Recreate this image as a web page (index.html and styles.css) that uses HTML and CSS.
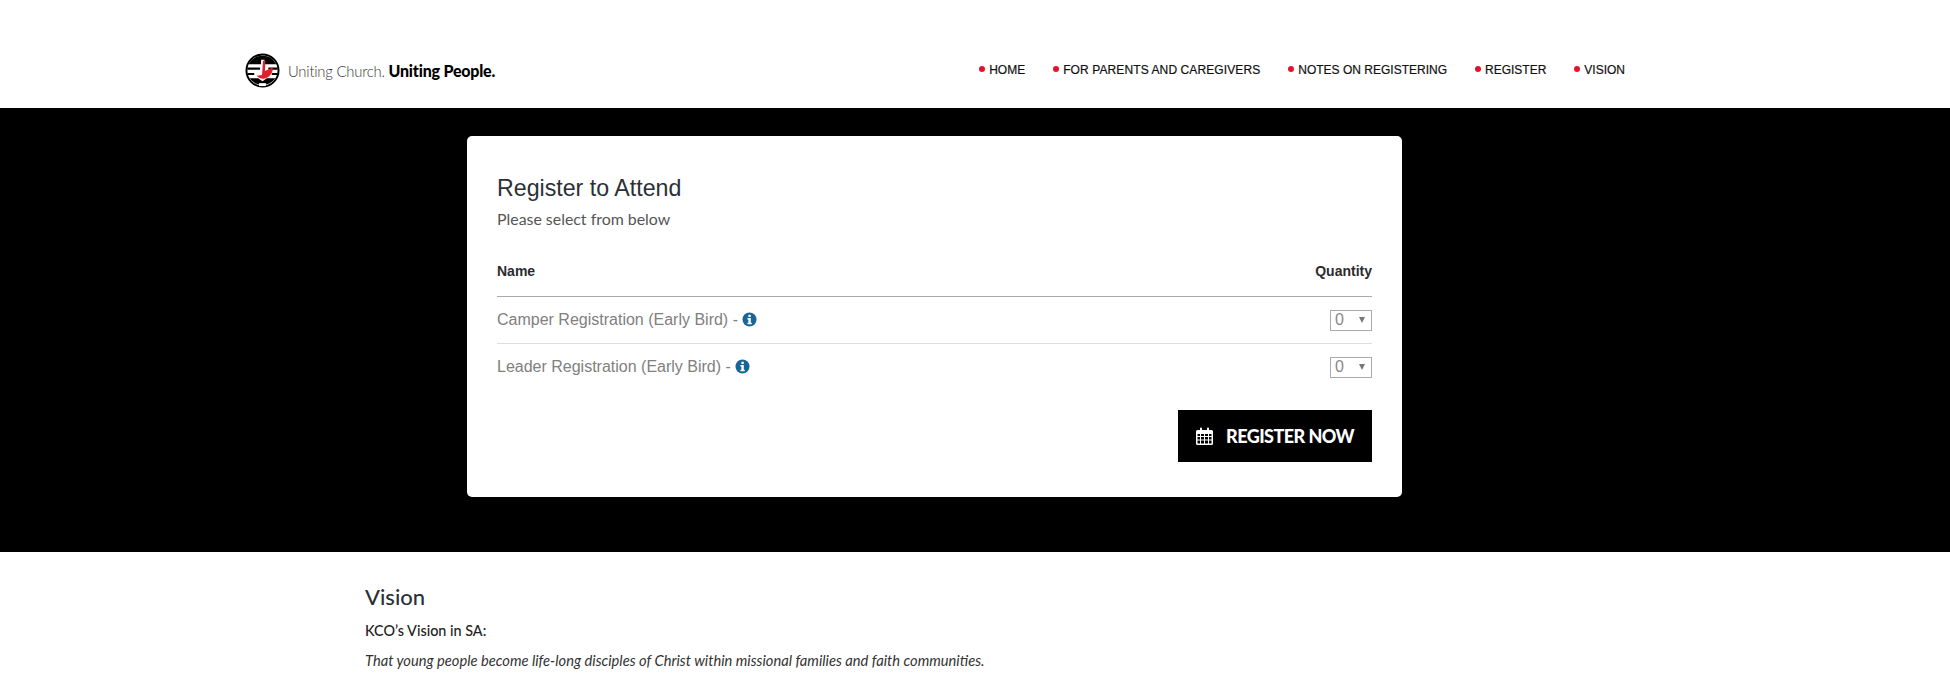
FILE: index.html
```html
<!DOCTYPE html>
<html lang="en">
<head>
<meta charset="utf-8">
<title>Register to Attend</title>
<link rel="stylesheet" href="styles.css">
</head>
<body>
<header class="site-header">
  <a class="logo" href="#">
    <svg class="logo-mark" viewBox="0 0 36 36" width="35" height="35" aria-hidden="true">
      <circle cx="18" cy="18" r="16.500" fill="#fff" stroke="#000" stroke-width="2"/>
      <path d="M3.800 11.500A16 16 0 0 1 32.200 11.500H20V7h-3.500v4.500z" fill="#000"/>
      <path d="M2.500 15h13v2.200h-13zM24 15h9.500v2.200H24z" fill="#000"/>
      <path d="M2.500 20.500h7v2h-7zM27.500 20.500h6v2h-6z" fill="#000"/>
      <path d="M4.800 26h8.700l4.500 3 4.500-3h8.700A16 16 0 0 1 4.800 26z" fill="#000"/>
      <path d="M14.500 31h7v3h-7z" fill="#fff"/>
      <path d="M18.500 8h2.500l-.5 10.500 8-3.500c.8 6-4.500 11.500-10 11.500-2.500 0-4.500-1-6.500-3l5.500-1z" fill="#e2202c"/>
    </svg>
    <span class="logo-text">Uniting Church. <b>Uniting People.</b></span>
  </a>
  <nav class="main-nav">
    <a href="#">HOME</a>
    <a class="nav-wide" href="#">FOR PARENTS AND CAREGIVERS</a>
    <a href="#">NOTES ON REGISTERING</a>
    <a href="#">REGISTER</a>
    <a href="#">VISION</a>
  </nav>
</header>
<section class="band">
  <div class="card">
    <h2 class="card-title">Register to Attend</h2>
    <p class="card-sub">Please select from below</p>
    <div class="row row-head"><span>Name</span><span>Quantity</span></div>
    <div class="row row-item">
      <span class="ticket">Camper Registration (Early Bird) - <svg class="info" viewBox="0 0 16 16" width="15" height="15" aria-hidden="true"><circle cx="8" cy="8" r="7.500" fill="#1a6496"/><rect x="6.800" y="2.800" width="2.600" height="2.500" rx=".5" fill="#fff"/><path d="M5.800 6.500h3.600v5h1v1.600H5.800v-1.600h1v-3.400h-1z" fill="#fff"/></svg></span>
      <span class="qty"><span>0</span><i class="arrow"></i></span>
    </div>
    <div class="row row-item row-last">
      <span class="ticket">Leader Registration (Early Bird) - <svg class="info" viewBox="0 0 16 16" width="15" height="15" aria-hidden="true"><circle cx="8" cy="8" r="7.500" fill="#1a6496"/><rect x="6.800" y="2.800" width="2.600" height="2.500" rx=".5" fill="#fff"/><path d="M5.800 6.500h3.600v5h1v1.600H5.800v-1.600h1v-3.400h-1z" fill="#fff"/></svg></span>
      <span class="qty"><span>0</span><i class="arrow"></i></span>
    </div>
    <div class="actions">
      <a class="register" href="#">
        <svg class="cal" viewBox="0 0 17 18" width="17" height="18" aria-hidden="true"><path fill="#fff" fill-rule="evenodd" d="M1.500 3H4V1.500a1 1 0 0 1 2 0V3h5V1.500a1 1 0 0 1 2 0V3h2.500A1.500 1.500 0 0 1 17 4.500v12a1.500 1.500 0 0 1-1.500 1.500h-14A1.500 1.500 0 0 1 0 16.500v-12A1.500 1.500 0 0 1 1.500 3zM1.500 7v2h2.500V7zm3.500 0v2h3V7zm4 0v2h3V7zm4 0v2h2.500V7zM1.500 10v2.500h2.500V10zm3.500 0v2.500h3V10zm4 0v2.500h3V10zm4 0v2.500h2.500V10zM1.500 13.500v3h2.500v-3zm3.500 0v3h3v-3zm4 0v3h3v-3zm4 0v3h2.500v-3z"/></svg>
        <span>REGISTER NOW</span>
      </a>
    </div>
  </div>
</section>
<section class="vision">
  <h3>Vision</h3>
  <p class="lead">KCO’s Vision in SA:</p>
  <p class="quote">That young people become life-long disciples of Christ within missional families and faith communities.</p>
</section>
</body>
</html>
```
FILE: styles.css
```css
* { box-sizing: border-box; }
html, body { margin: 0; padding: 0; }
body { background: #fff; color: #222; font-family: "Lato", sans-serif; height: 694px; overflow: hidden; }
a { text-decoration: none; color: inherit; }

.site-header {
  height: 108px;
  padding: 51px 325px 0 245px;
  display: flex;
  justify-content: space-between;
  align-items: flex-start;
}
.logo { display: flex; align-items: center; gap: 8px; margin-top: 2px; }
.logo-mark { display: block; }
.logo-text { font-size: 14.800px; font-weight: 300; color: #333; letter-spacing: -.2px; }
.logo-text b { font-size: 16px; font-weight: 900; color: #000; letter-spacing: -.2px; }
.main-nav { display: flex; gap: 28px; padding-top: 11px; }
.main-nav a {
  font-family: "Liberation Sans", Arial, sans-serif;
  font-size: 12px;
  font-weight: 400;
  color: #111;
  line-height: 16px;
  display: flex;
  align-items: center;
  gap: 4px;
  -webkit-text-stroke: .2px #111;
}
.main-nav a::before {
  content: "";
  width: 6px;
  height: 6px;
  border-radius: 50%;
  background: #e8112d;
  margin-top: -2px;
}
.main-nav .nav-wide { letter-spacing: .1px; }

.band { background: #000; height: 444px; padding: 28px 0 0 467px; }
.card {
  width: 935px;
  height: 361px;
  background: #fff;
  border-radius: 5px;
  padding: 38px 30px 0;
}
.card-title {
  font-family: "Liberation Sans", Arial, sans-serif;
  font-size: 23.200px;
  font-weight: 400;
  line-height: 28px;
  color: #2b3035;
  margin: 0;
}
.card-sub { font-size: 15.900px; line-height: 20px; color: #555; margin: 7px 0 0; }
.row { display: flex; justify-content: space-between; align-items: center; }
.row-head {
  height: 48px;
  margin-top: 20px;
  padding-bottom: 3px;
  font-family: "Liberation Sans", Arial, sans-serif;
  font-size: 14px;
  font-weight: 700;
  color: #2b2b2b;
  border-bottom: 1px solid #aaa;
}
.row-item {
  height: 47px;
  border-bottom: 1px solid #ddd;
  font-family: "Liberation Sans", Arial, sans-serif;
  font-size: 16px;
  color: #808080;
}
.row-last { border-bottom-color: transparent; }
.ticket { display: flex; align-items: center; white-space: pre; }
.info { display: block; margin-top: -1px; }
.qty {
  width: 42px;
  height: 21px;
  border: 1px solid #aaa;
  display: flex;
  justify-content: space-between;
  align-items: center;
  padding: 0 6px 0 4px;
  font-size: 16px;
  color: #888;
}
.arrow {
  width: 0;
  height: 0;
  border-left: 3px solid transparent;
  border-right: 3px solid transparent;
  border-top: 6px solid #777;
}
.actions { display: flex; justify-content: flex-end; margin-top: 19px; }
.register {
  width: 194px;
  height: 52px;
  background: #000;
  color: #fff;
  display: flex;
  align-items: center;
  gap: 13px;
  padding-left: 18px;
  font-size: 18px;
  font-weight: 900;
  letter-spacing: -.55px;
}
.cal { display: block; }

.vision { padding: 31px 0 0 365px; color: #222; }
.vision h3 { font-size: 22px; font-weight: 500; line-height: 28px; margin: 0; color: #2b3035; }
.lead { font-size: 14.400px; line-height: 20px; margin: 10px 0 0; font-weight: 500; }
.quote { font-size: 14.700px; line-height: 20px; margin: 9px 0 0; font-style: italic; color: #333; }
```
